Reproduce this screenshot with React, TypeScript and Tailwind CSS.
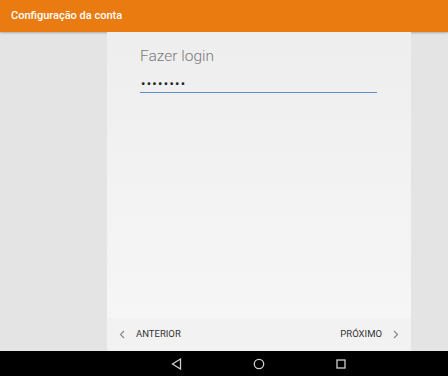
export default function App() {
  return (
    <div className="flex h-[376px] w-[448px] flex-col overflow-hidden bg-[#e4e4e4] font-['Roboto',sans-serif]">
      <header className="flex h-[32px] shrink-0 items-center bg-[#e97b10] pl-[11px] shadow-[0_1px_2px_rgba(0,0,0,0.25)]">
        <span className="text-[11px] font-medium text-white">Configuração da conta</span>
      </header>

      <div className="flex flex-1 pl-[107px]">
        <div className="flex w-[304px] flex-col bg-gradient-to-b from-[#eeeeee] to-[#f7f7f7]">
          <div className="flex-1 pl-[33px] pr-[34px] pt-[14px]">
            <h1 className="text-[15.5px] font-light leading-[20px] text-[#7a7a7a]">Fazer login</h1>
            <div className="mt-[9px] flex h-[18px] items-end border-b border-[#5f8bd0] pl-[1px]">
              <span className="block text-[13px] leading-[16px] tracking-[1.3px] text-[#222]">••••••••</span>
            </div>
          </div>

          <div className="flex h-[33px] items-center justify-between bg-[#f2f2f2] pl-[12px] pr-[12px]">
            <div className="flex items-center gap-[11px]">
              <svg width="6" height="9" viewBox="0 0 6 9" fill="none" stroke="#888" strokeWidth="1.2">
                <path d="M5 1 L1.5 4.5 L5 8" />
              </svg>
              <span className="text-[9.5px] text-[#333]">ANTERIOR</span>
            </div>
            <div className="flex items-center gap-[11px]">
              <span className="text-[9.5px] text-[#333]">PRÓXIMO</span>
              <svg width="6" height="9" viewBox="0 0 6 9" fill="none" stroke="#888" strokeWidth="1.2">
                <path d="M1 1 L4.5 4.5 L1 8" />
              </svg>
            </div>
          </div>
        </div>
      </div>

      <nav className="flex h-[25px] shrink-0 items-center justify-center gap-[71px] bg-black pl-[68px]">
        <svg width="11" height="12" viewBox="0 0 11 12" fill="none" stroke="#cfcfcf" strokeWidth="1.3">
          <path d="M9.5 1 L1.5 6 L9.5 11 Z" />
        </svg>
        <svg width="12" height="12" viewBox="0 0 12 12" fill="none" stroke="#cfcfcf" strokeWidth="1.3">
          <circle cx="6" cy="6" r="4.7" />
        </svg>
        <svg width="10" height="10" viewBox="0 0 10 10" fill="none" stroke="#cfcfcf" strokeWidth="1.3">
          <rect x="1" y="1" width="8" height="8" />
        </svg>
      </nav>
    </div>
  );
}
